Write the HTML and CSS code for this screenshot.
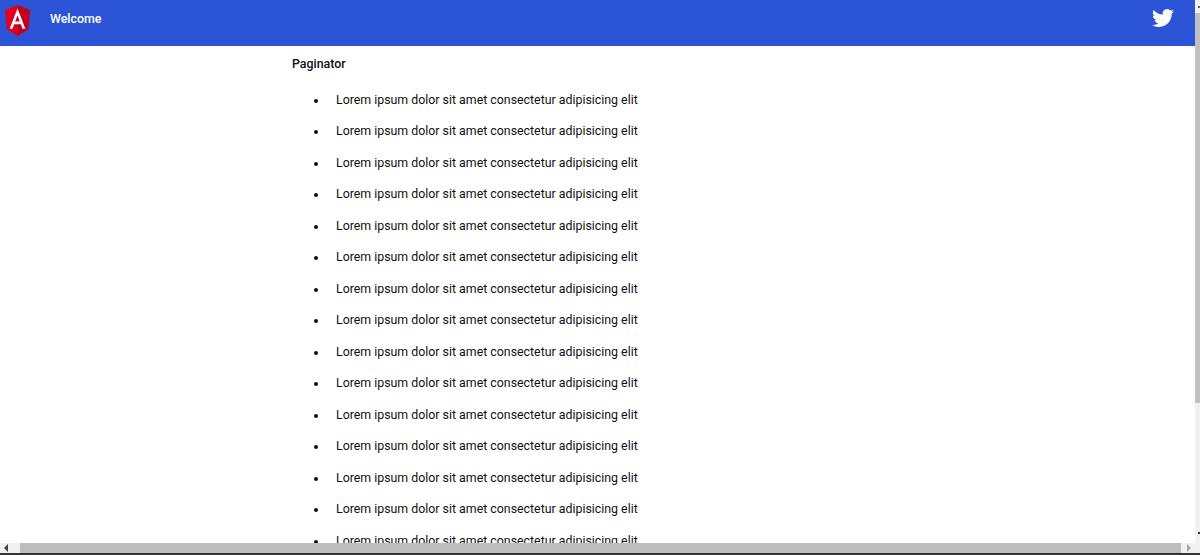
FILE: index.html
```html
<!DOCTYPE html>
<html lang="en">
<head>
<meta charset="utf-8">
<title>Paginator</title>
<link rel="stylesheet" href="styles.css">
</head>
<body>
<div class="viewport">
  <div class="upper">
    <div class="page">
      <header class="toolbar">
        <svg class="logo" viewBox="0 0 250 250" preserveAspectRatio="none" aria-hidden="true">
          <polygon fill="#dd0020" points="125,0 8,42 26,196 125,250 224,196 242,42"/>
          <polygon fill="#c3001f" points="125,0 125,250 224,196 242,42"/>
          <path fill="#fff" d="M125 28L52 192h27l15-37h62l15 37h27L125 28zm21 105h-42l21-50 21 50z"/>
        </svg>
        <span class="title">Welcome</span>
        <svg class="bird" viewBox="0 0 24 24" aria-hidden="true">
          <path fill="#fff" d="M23.95 4.57a10 10 0 0 1-2.82.77 4.96 4.96 0 0 0 2.16-2.72c-.95.55-2 .96-3.12 1.18a4.92 4.92 0 0 0-8.38 4.48C7.69 8.1 4.07 6.13 1.64 3.16a4.82 4.82 0 0 0-.66 2.47c0 1.71.87 3.21 2.19 4.1a4.9 4.9 0 0 1-2.23-.61v.06c0 2.39 1.7 4.38 3.95 4.83a4.9 4.9 0 0 1-2.21.08 4.93 4.93 0 0 0 4.6 3.42A9.87 9.87 0 0 1 0 19.54a13.94 13.94 0 0 0 7.55 2.21c9.06 0 14-7.5 14-13.99 0-.21 0-.42-.02-.63a9.94 9.94 0 0 0 2.46-2.55z"/>
        </svg>
      </header>
      <main class="content">
        <h2 class="heading">Paginator</h2>
        <ul class="items">
          <li>Lorem ipsum dolor sit amet consectetur adipisicing elit</li>
          <li>Lorem ipsum dolor sit amet consectetur adipisicing elit</li>
          <li>Lorem ipsum dolor sit amet consectetur adipisicing elit</li>
          <li>Lorem ipsum dolor sit amet consectetur adipisicing elit</li>
          <li>Lorem ipsum dolor sit amet consectetur adipisicing elit</li>
          <li>Lorem ipsum dolor sit amet consectetur adipisicing elit</li>
          <li>Lorem ipsum dolor sit amet consectetur adipisicing elit</li>
          <li>Lorem ipsum dolor sit amet consectetur adipisicing elit</li>
          <li>Lorem ipsum dolor sit amet consectetur adipisicing elit</li>
          <li>Lorem ipsum dolor sit amet consectetur adipisicing elit</li>
          <li>Lorem ipsum dolor sit amet consectetur adipisicing elit</li>
          <li>Lorem ipsum dolor sit amet consectetur adipisicing elit</li>
          <li>Lorem ipsum dolor sit amet consectetur adipisicing elit</li>
          <li>Lorem ipsum dolor sit amet consectetur adipisicing elit</li>
          <li>Lorem ipsum dolor sit amet consectetur adipisicing elit</li>
        </ul>
      </main>
    </div>
    <div class="vbar">
      <span class="vtick"></span>
      <div class="vthumb"></div>
      <span class="vtick vtick-end"></span>
    </div>
  </div>
  <div class="hbar">
    <span class="arrow-left"></span>
    <div class="hthumb"></div>
    <span class="arrow-right"></span>
    <div class="corner"></div>
  </div>
  <div class="edge"></div>
</div>
</body>
</html>
```
FILE: styles.css
```css
html, body { margin: 0; padding: 0; height: 100%; overflow: hidden; background: #fff; }
.viewport { display: flex; flex-direction: column; height: 555px; font-family: Roboto, sans-serif; color: #111; }
.upper { display: flex; flex: 1; min-height: 0; }
.page { flex: 1; min-width: 0; overflow: hidden; }
.toolbar { display: flex; align-items: center; height: 46px; box-sizing: border-box; background: #2b55d6; padding: 0 21px 10px 4px; }
.logo { flex: none; width: 27px; height: 31px; margin-top: 4px; }
.title { margin-left: 19px; font-size: 12.4px; font-weight: 500; color: #fff; }
.bird { flex: none; width: 22px; height: 22px; margin-left: auto; }
.content { padding: 0 0 0 292px; }
.heading { margin: 10px 0 0; font-size: 12.4px; line-height: 16px; font-weight: 500; }
.items { margin: 19.6px 0 0; padding: 0 0 0 22px; list-style: none; font-size: 12.36px; line-height: 16px; }
.items li { display: flex; align-items: center; gap: 18px; margin-bottom: 15.5px; }
.items li::before { content: ""; flex: none; width: 4px; height: 4px; margin-top: 2px; border-radius: 50%; background: #111; }
.vbar { flex: none; display: flex; flex-direction: column; width: 5px; background: #f1f1f1; }
.vtick { flex: none; align-self: flex-end; width: 2px; height: 2px; margin: 6px 0 5px; background: #666; }
.vthumb { flex: none; height: 390px; background: #c1c1c1; }
.vtick-end { margin: auto 0 9px; background: #333; }
.hbar { flex: none; display: flex; align-items: center; height: 10px; background: #f1f1f1; }
.arrow-left { flex: none; width: 0; height: 0; margin: 0 12px 0 4px; border-style: solid; border-width: 4px 4px 4px 0; border-color: transparent #444 transparent transparent; }
.hthumb { flex: 1; height: 10px; background: #bdbdbd; }
.arrow-right { flex: none; width: 0; height: 0; margin: 0 8px 0 6px; border-style: solid; border-width: 4px 0 4px 4px; border-color: transparent transparent transparent #a3a3a3; }
.corner { flex: none; width: 1px; height: 10px; background: #f1f1f1; }
.edge { flex: none; height: 2px; background: #333; }
```
